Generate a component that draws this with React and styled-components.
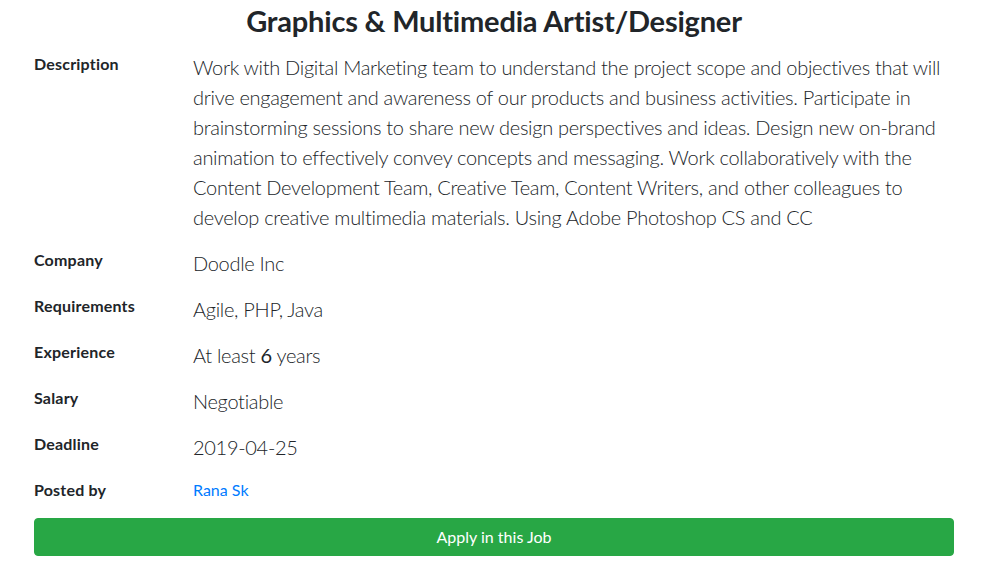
import React from 'react';
import styled, { createGlobalStyle } from 'styled-components';

const GlobalStyle = createGlobalStyle`
	body {
		margin: 0;
		background: #fff;
		color: #212529;
		font-family: 'Lato', 'Open Sans', sans-serif;
		font-variant-ligatures: none;
	}
`;

const job = {
	title: 'Graphics & Multimedia Artist/Designer',
	description:
		'Work with Digital Marketing team to understand the project scope and objectives that will drive engagement and awareness of our products and business activities. Participate in brainstorming sessions to share new design perspectives and ideas. Design new on-brand animation to effectively convey concepts and messaging. Work collaboratively with the Content Development Team, Creative Team, Content Writers, and other colleagues to develop creative multimedia materials. Using Adobe Photoshop CS and CC',
	company: 'Doodle Inc',
	requirements: 'Agile, PHP, Java',
	experience: 6,
	salary: 'Negotiable',
	deadline: '2019-04-25',
	postedBy: 'Rana Sk',
};

const App = () => {
	return (
		<>
			<GlobalStyle />
			<Page>
				<Title>{job.title}</Title>
				<Details>
					<Label>Description</Label>
					<Lead>{job.description}</Lead>
					<Label>Company</Label>
					<Lead>{job.company}</Lead>
					<Label>Requirements</Label>
					<Lead>{job.requirements}</Lead>
					<Label>Experience</Label>
					<Lead>
						At least <Strong>{job.experience}</Strong> years
					</Lead>
					<Label>Salary</Label>
					<Lead>{job.salary}</Lead>
					<Label>Deadline</Label>
					<Lead>{job.deadline}</Lead>
					<Label>Posted by</Label>
					<Value>
						<Link href='#'>{job.postedBy}</Link>
					</Value>
				</Details>
				<ApplyButton>Apply in this Job</ApplyButton>
			</Page>
		</>
	);
};

const Page = styled.div`
	width: 920px;
	padding: 2px 0 12px 34px;
	display: flex;
	flex-direction: column;
`;

const Title = styled.h2`
	margin: 0 0 12px;
	font-size: 29px;
	font-weight: 700;
	line-height: 38px;
	letter-spacing: -0.2px;
	text-align: center;
`;

const Details = styled.dl`
	display: grid;
	grid-template-columns: 159px 1fr;
	margin: 0;
`;

const Label = styled.dt`
	font-size: 16px;
	font-weight: 700;
	line-height: 24px;
	letter-spacing: 0.2px;
	margin: 0;
`;

const Lead = styled.dd`
	margin: 0 0 16px;
	font-size: 20px;
	font-weight: 300;
	line-height: 30px;
	letter-spacing: -0.3px;
	padding-right: 6px;
`;

const Value = styled.dd`
	margin: 0 0 16px;
	font-size: 16px;
	line-height: 24px;
`;

const Strong = styled.span`
	font-weight: 400;
`;

const Link = styled.a`
	color: #007bff;
	text-decoration: none;
`;

const ApplyButton = styled.button`
	width: 920px;
	height: 38px;
	border: 1px solid #28a745;
	border-radius: 4px;
	background: #28a745;
	color: #fff;
	font-family: 'Lato', 'Open Sans', sans-serif;
	font-size: 16px;
	line-height: 24px;
	cursor: pointer;
`;

export default App;
